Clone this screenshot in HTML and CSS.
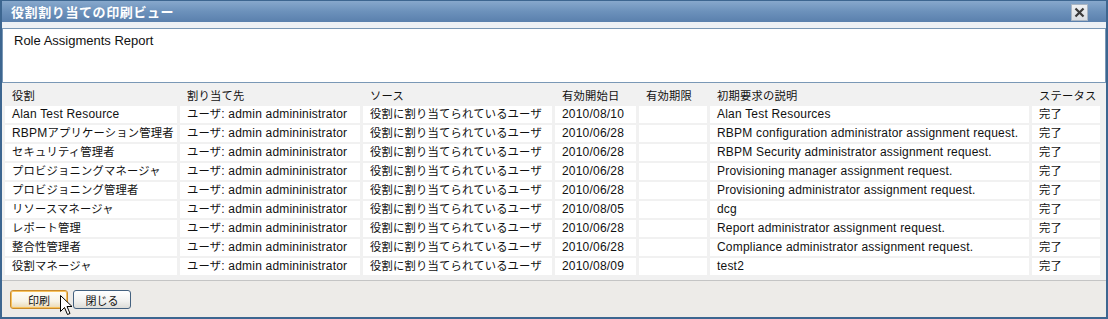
FILE: index.html
```html
<!DOCTYPE html>
<html lang="ja">
<head>
    <meta charset="UTF-8">
    <title>役割割り当ての印刷ビュー</title>
    <link rel="stylesheet" href="styles.css">
</head>
<body>
    <div class="window">
        <div class="titlebar">
            <span class="title">役割割り当ての印刷ビュー</span>
            <span class="close">
                <svg width="11" height="11" viewBox="0 0 11 11">
                    <path d="M1.5 1.5 L9.5 9.5 M9.5 1.5 L1.5 9.5" stroke="#3a3a3a" stroke-width="2.2" fill="none"/>
                </svg>
            </span>
        </div>
        <div class="strip"></div>
        <div class="report-head">Role Assigments Report</div>
        <div class="grid">
            <table class="report">
                <colgroup>
                    <col style="width:172px">
                    <col style="width:180px">
                    <col style="width:189px">
                    <col style="width:81px">
                    <col style="width:68px">
                    <col style="width:319px">
                    <col style="width:68px">
                </colgroup>
                <thead>
                    <tr>
                        <th class="ja">役割</th>
                        <th class="ja">割り当て先</th>
                        <th class="ja">ソース</th>
                        <th class="ja">有効開始日</th>
                        <th class="ja">有効期限</th>
                        <th class="ja">初期要求の説明</th>
                        <th class="ja">ステータス</th>
                    </tr>
                </thead>
                <tbody>
                    <tr><td>Alan Test Resource</td><td><span class="ja">ユーザ</span>: admin admininistrator</td><td class="ja">役割に割り当てられているユーザ</td><td>2010/08/10</td><td></td><td>Alan Test Resources</td><td class="ja">完了</td></tr>
                    <tr><td>RBPM<span class="ja">アプリケーション管理者</span></td><td><span class="ja">ユーザ</span>: admin admininistrator</td><td class="ja">役割に割り当てられているユーザ</td><td>2010/06/28</td><td></td><td>RBPM configuration administrator assignment request.</td><td class="ja">完了</td></tr>
                    <tr><td class="ja">セキュリティ管理者</td><td><span class="ja">ユーザ</span>: admin admininistrator</td><td class="ja">役割に割り当てられているユーザ</td><td>2010/06/28</td><td></td><td>RBPM Security administrator assignment request.</td><td class="ja">完了</td></tr>
                    <tr><td class="ja">プロビジョニングマネージャ</td><td><span class="ja">ユーザ</span>: admin admininistrator</td><td class="ja">役割に割り当てられているユーザ</td><td>2010/06/28</td><td></td><td>Provisioning manager assignment request.</td><td class="ja">完了</td></tr>
                    <tr><td class="ja">プロビジョニング管理者</td><td><span class="ja">ユーザ</span>: admin admininistrator</td><td class="ja">役割に割り当てられているユーザ</td><td>2010/06/28</td><td></td><td>Provisioning administrator assignment request.</td><td class="ja">完了</td></tr>
                    <tr><td class="ja">リソースマネージャ</td><td><span class="ja">ユーザ</span>: admin admininistrator</td><td class="ja">役割に割り当てられているユーザ</td><td>2010/08/05</td><td></td><td>dcg</td><td class="ja">完了</td></tr>
                    <tr><td class="ja">レポート管理</td><td><span class="ja">ユーザ</span>: admin admininistrator</td><td class="ja">役割に割り当てられているユーザ</td><td>2010/06/28</td><td></td><td>Report administrator assignment request.</td><td class="ja">完了</td></tr>
                    <tr><td class="ja">整合性管理者</td><td><span class="ja">ユーザ</span>: admin admininistrator</td><td class="ja">役割に割り当てられているユーザ</td><td>2010/06/28</td><td></td><td>Compliance administrator assignment request.</td><td class="ja">完了</td></tr>
                    <tr><td class="ja">役割マネージャ</td><td><span class="ja">ユーザ</span>: admin admininistrator</td><td class="ja">役割に割り当てられているユーザ</td><td>2010/08/09</td><td></td><td>test2</td><td class="ja">完了</td></tr>
                </tbody>
            </table>
        </div>
        <div class="footer">
            <button class="btn btn-hover">印刷</button>
            <button class="btn">閉じる</button>
            <svg class="cursor" width="13" height="21" viewBox="0 0 13 21">
                <path d="M0.5 0.5 L0.5 16.5 L4.5 12.5 L7.5 19.5 L10 18.5 L7 11.5 L12 11.5 Z" fill="#fff" stroke="#000" stroke-width="1"/>
            </svg>
        </div>
    </div>
</body>
</html>
```
FILE: styles.css
```css
* {
    margin: 0;
    padding: 0;
    box-sizing: border-box;
}
body {
    font-family: "Liberation Sans", "Noto Sans CJK JP", sans-serif;
    font-size: 12px;
    color: #111;
    background: #fff;
}
.ja {
    font-size: 11.3px;
}
.window {
    width: 1108px;
    height: 319px;
    border: 2px solid #3d6690;
    border-top-width: 1px;
    display: flex;
    flex-direction: column;
    background: #f3f3f3;
}
.titlebar {
    height: 21px;
    background: linear-gradient(#87a8cc, #6c91bb 50%, #5a80ad);
    display: flex;
    align-items: center;
    justify-content: space-between;
    padding: 0 18px 0 9px;
}
.title {
    color: #fff;
    font-weight: bold;
    font-size: 13px;
    letter-spacing: 0.6px;
}
.close {
    width: 17px;
    height: 17px;
    margin-top: 2px;
    background: linear-gradient(#eef0f2, #d9dde2);
    border: 1px solid #a9b6c4;
    display: flex;
    align-items: center;
    justify-content: center;
}
.strip {
    height: 6px;
    background: #edf1f5;
}
.report-head {
    height: 55px;
    background: #fff;
    border: 1px solid #7a98b6;
    padding: 4px 11px;
    font-size: 13px;
    line-height: 16px;
}
.grid {
    height: 197px;
    padding: 1px 0 3px;
    background: #f1f1f1;
}
.report {
    table-layout: fixed;
    width: 1101px;
    border-collapse: separate;
    border-spacing: 3px 2px;
    letter-spacing: 0.2px;
}
.report th {
    height: 18px;
    font-weight: normal;
    text-align: left;
    padding: 0 0 0 7px;
    white-space: nowrap;
}
.report td {
    height: 17px;
    background: #fff;
    padding: 0 0 0 7px;
    white-space: nowrap;
    overflow: hidden;
    line-height: 17px;
}
.footer {
    flex: 1;
    border-top: 1px solid #c4c4c4;
    background: #edebe8;
    padding: 9px 0 0 8px;
    display: flex;
    gap: 5px;
    align-items: flex-start;
    position: relative;
}
.btn {
    width: 58px;
    height: 19px;
    font-family: "Liberation Sans", "Noto Sans CJK JP", sans-serif;
    font-size: 11px;
    color: #111;
    border: 1px solid #44617f;
    border-radius: 3px;
    background: linear-gradient(#ffffff, #f1f1ef 60%, #dcdcd8);
}
.btn-hover {
    border-color: #c98a2a;
    box-shadow: inset 0 0 0 1px #f8c25c;
    background: linear-gradient(#fffdf6, #f7f3e7 60%, #ead8b3);
}
.cursor {
    position: absolute;
    left: 58px;
    top: 14px;
}
```
